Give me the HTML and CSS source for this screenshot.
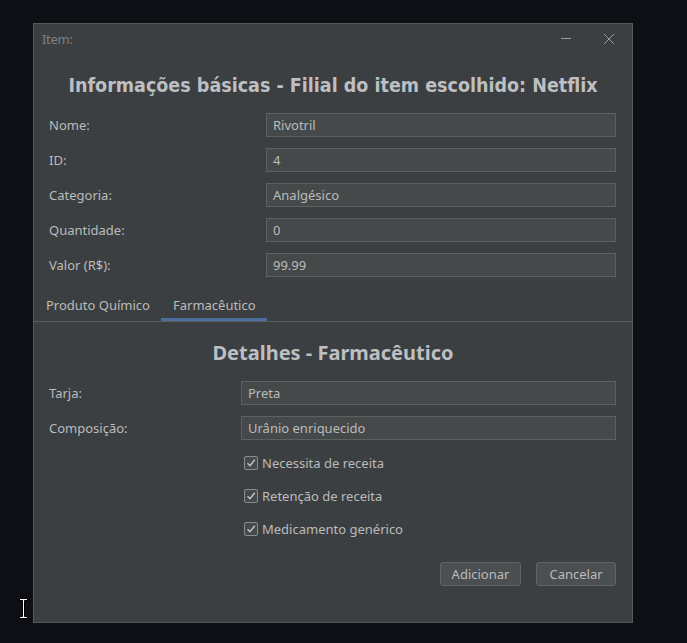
FILE: index.html
```html
<!DOCTYPE html>
<html lang="pt">
<head>
<meta charset="utf-8">
<title>Item</title>
<link rel="stylesheet" href="styles.css">
</head>
<body>
<div class="window">
  <div class="titlebar">
    <span class="title">Item:</span>
    <div class="controls">
      <svg class="ctl" width="12" height="12" viewBox="0 0 12 12"><path d="M1 5.5H11" stroke="#9a9d9f" stroke-width="1"/></svg>
      <svg class="ctl" width="12" height="12" viewBox="0 0 12 12"><path d="M1 1L11 11M11 1L1 11" stroke="#9a9d9f" stroke-width="1"/></svg>
    </div>
  </div>
  <h1 class="heading">Informações básicas - Filial do item escolhido: Netflix</h1>
  <div class="form main-form">
    <label class="lbl">Nome:</label><div class="field">Rivotril</div>
    <label class="lbl">ID:</label><div class="field">4</div>
    <label class="lbl">Categoria:</label><div class="field">Analgésico</div>
    <label class="lbl">Quantidade:</label><div class="field">0</div>
    <label class="lbl">Valor (R$):</label><div class="field">99.99</div>
  </div>
  <div class="tabs">
    <div class="tab">Produto Químico</div>
    <div class="tab active">Farmacêutico</div>
  </div>
  <div class="panel">
    <h2 class="subheading">Detalhes - Farmacêutico</h2>
    <div class="form detail-form">
      <label class="lbl">Tarja:</label><div class="field">Preta</div>
      <label class="lbl">Composição:</label><div class="field">Urânio enriquecido</div>
    </div>
    <div class="checks">
      <div class="check"><span class="box"><svg width="12" height="12" viewBox="0 0 12 12"><path d="M2.5 6.2L5 8.7L9.8 2.8" fill="none" stroke="#c4c6c8" stroke-width="1.4"/></svg></span>Necessita de receita</div>
      <div class="check"><span class="box"><svg width="12" height="12" viewBox="0 0 12 12"><path d="M2.5 6.2L5 8.7L9.8 2.8" fill="none" stroke="#c4c6c8" stroke-width="1.4"/></svg></span>Retenção de receita</div>
      <div class="check"><span class="box"><svg width="12" height="12" viewBox="0 0 12 12"><path d="M2.5 6.2L5 8.7L9.8 2.8" fill="none" stroke="#c4c6c8" stroke-width="1.4"/></svg></span>Medicamento genérico</div>
    </div>
    <div class="buttons">
      <button class="btn">Adicionar</button>
      <button class="btn">Cancelar</button>
    </div>
  </div>
</div>
<svg class="cursor" width="9" height="21" viewBox="0 0 9 21"><path d="M0.5 0.5H8.5V2.5H5.5V18.5H8.5V20.5H0.5V18.5H3.5V2.5H0.5Z" fill="#ffffff" stroke="#000000" stroke-width="1"/></svg>
</body>
</html>
```
FILE: styles.css
```css
html, body {
  margin: 0;
  padding: 0;
}
body {
  background: #0e0f14;
  width: 687px;
  height: 643px;
  position: relative;
  font-family: "Noto Sans", "Open Sans", sans-serif;
  font-size: 13px;
  color: #bbbbbb;
  overflow: hidden;
}
.window {
  box-sizing: border-box;
  margin: 23px 0 0 33px;
  width: 600px;
  height: 600px;
  background: #3c3f41;
  border: 1px solid #56595b;
  display: flex;
  flex-direction: column;
}
.titlebar {
  box-sizing: border-box;
  height: 33px;
  display: flex;
  align-items: center;
  justify-content: space-between;
  padding: 0 17px 3px 8px;
}
.title {
  color: #7c8083;
  font-size: 13px;
  letter-spacing: -0.3px;
}
.controls {
  display: flex;
  gap: 31px;
  align-items: center;
}
.ctl { display: block; }
.heading {
  margin: 16px 0 0;
  text-align: center;
  font-size: 19.5px;
  font-weight: bold;
  line-height: 26px;
  color: #bdbfc2;
  font-family: "DejaVu Sans Condensed", "Noto Sans", sans-serif;
}
.form {
  display: grid;
  row-gap: 11px;
  align-items: center;
}
.main-form {
  margin: 14px 16px 0 15px;
  grid-template-columns: 217px 1fr;
}
.detail-form {
  margin: 15px 16px 0 15px;
  grid-template-columns: 192px 1fr;
}
.lbl {
  box-sizing: border-box;
  height: 24px;
  line-height: 23px;
  padding-top: 1px;
}
.field {
  box-sizing: border-box;
  height: 24px;
  line-height: 21px;
  padding: 1px 6px 0;
  background: #45494a;
  border: 1px solid #5e6163;
  color: #bbbbbb;
}
.tabs {
  margin-top: 14px;
  display: flex;
  padding-left: 2px;
  border-bottom: 1px solid #5c5f61;
  height: 30px;
}
.tab {
  padding: 2px 11px 0 10px;
  line-height: 25px;
  border-bottom: 3px solid transparent;
}
.tab.active {
  border-bottom-color: #4a6d9b;
  padding: 2px 11px 0 12px;
}
.panel {
  flex: 1;
  display: flex;
  flex-direction: column;
}
.subheading {
  margin: 18px 0 0;
  text-align: center;
  font-size: 20px;
  font-weight: bold;
  line-height: 26px;
  color: #bdbfc2;
}
.checks {
  margin: 13px 0 0 210px;
  display: flex;
  flex-direction: column;
  gap: 13px;
}
.check {
  display: flex;
  align-items: center;
  gap: 4px;
  line-height: 20px;
}
.box {
  box-sizing: border-box;
  width: 14px;
  height: 14px;
  border: 1px solid #8a8d90;
  border-radius: 2px;
  background: #45494a;
  display: flex;
  align-items: center;
  justify-content: center;
}
.box svg { display: block; }
.buttons {
  margin: 23px 16px 0 0;
  display: flex;
  justify-content: flex-end;
  gap: 15px;
}
.btn {
  box-sizing: border-box;
  height: 24px;
  padding: 0;
  background: #4b4f51;
  border: 1px solid #5f6365;
  border-radius: 3px;
  color: #bbbbbb;
  font-family: "Noto Sans", sans-serif;
  font-size: 13px;
}
.btn:first-child { width: 81px; }
.btn:last-child { width: 80px; }
.cursor {
  position: absolute;
  left: 19px;
  top: 598px;
}
```
